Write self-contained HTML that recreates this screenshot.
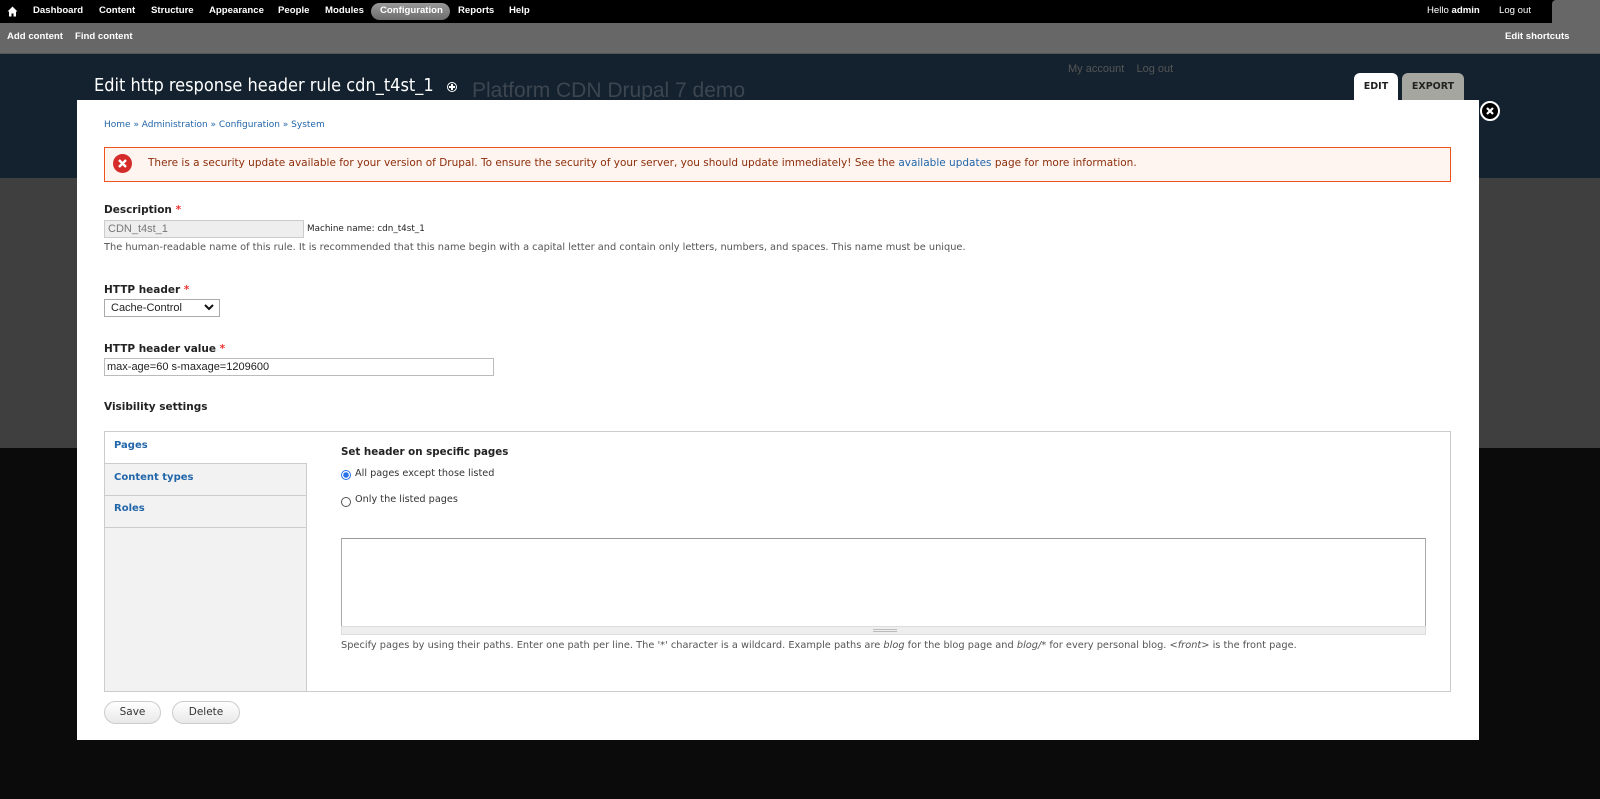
<!DOCTYPE html>
<html><head><meta charset="utf-8"><style>
*{box-sizing:border-box;margin:0;padding:0}
body{width:1600px;height:799px;overflow:hidden;background:#0b0b0b;font-family:"DejaVu Sans","Liberation Sans",sans-serif;position:relative}
.a{position:absolute;white-space:nowrap}
.tb{font-family:"Liberation Sans",sans-serif;font-weight:bold;font-size:9.6px;color:#fff}
.f{font-size:9.7px;color:#333}
.lbl{font-size:10.5px;font-weight:bold;color:#222}
.req{color:#e33}
.help{font-size:9.8px;color:#555}
.blue{color:#2266aa}
</style></head><body>
<div class="a" style="left:0;top:0;width:1600px;height:23px;background:#000"></div>
<div class="a" style="left:0;top:23px;width:1600px;height:31px;background:#676767;border-bottom:1px solid #555"></div>
<div class="a" style="left:0;top:54px;width:1600px;height:124px;background:#14222f"></div>
<div class="a" style="left:0;top:178px;width:1600px;height:270px;background:#3f3f3f"></div>

<svg class="a" style="left:7px;top:6px" width="11" height="11" viewBox="0 0 11 11"><path d="M5.5 0.5L0.5 5.5H2V10.5H4.5V7.5H6.5V10.5H9V5.5H10.5Z" fill="#fff"/></svg>
<div class="a tb" style="left:33px;top:5px">Dashboard</div>
<div class="a tb" style="left:99px;top:5px">Content</div>
<div class="a tb" style="left:151px;top:5px">Structure</div>
<div class="a tb" style="left:209px;top:5px">Appearance</div>
<div class="a tb" style="left:278px;top:5px">People</div>
<div class="a tb" style="left:325px;top:5px">Modules</div>
<div class="a" style="left:371px;top:3px;width:79px;height:17px;border-radius:9px;background:linear-gradient(#999,#6c6c6c)"></div>
<div class="a tb" style="left:380px;top:5px">Configuration</div>
<div class="a tb" style="left:458px;top:5px">Reports</div>
<div class="a tb" style="left:509px;top:5px">Help</div>
<div class="a tb" style="left:1427px;top:5px;font-weight:normal">Hello <b>admin</b></div>
<div class="a tb" style="left:1499px;top:5px;font-weight:normal">Log out</div>
<div class="a" style="left:1552px;top:0;width:48px;height:23px;background:#676767;border-radius:4px 0 0 0"></div>
<div class="a tb" style="left:7px;top:31px">Add content</div>
<div class="a tb" style="left:75px;top:31px">Find content</div>
<div class="a tb" style="left:1505px;top:31px">Edit shortcuts</div>

<div class="a" style="left:1068px;top:63px;font-family:'Liberation Sans',sans-serif;font-size:11px;color:#555">My account&nbsp;&nbsp;&nbsp;&nbsp;Log out</div>
<div class="a" style="left:472px;top:79px;font-family:'Liberation Sans',sans-serif;font-size:21px;color:#3b4651">Platform CDN Drupal 7 demo</div>
<div class="a" style="left:94px;top:75px;font-size:18px;color:#fff;font-family:'DejaVu Sans Condensed','DejaVu Sans',sans-serif;font-stretch:condensed;width:342px;overflow:hidden">Edit http response header rule cdn_t4st_1</div>
<div class="a" style="left:447px;top:82px;width:10px;height:10px;border:1.5px solid #fff;border-radius:50%"></div>
<div class="a" style="left:451px;top:84px;width:2px;height:6px;background:#fff"></div>
<div class="a" style="left:449px;top:86px;width:6px;height:2px;background:#fff"></div>
<div class="a" style="left:1354px;top:73px;width:44px;height:28px;background:#fff;border-radius:6px 6px 0 0;font-size:9.5px;font-weight:bold;color:#222;text-align:center;padding-top:8px">EDIT</div>
<div class="a" style="left:1402px;top:73px;width:62px;height:27px;background:#a6a6a0;border-radius:6px 6px 0 0;font-size:9.5px;font-weight:bold;color:#222;text-align:center;padding-top:8px">EXPORT</div>

<div class="a" style="left:77px;top:100px;width:1402px;height:640px;background:#fff"></div>
<div class="a" style="left:1480px;top:101px;width:20px;height:20px;border-radius:50%;background:#000;border:2px solid #fff"></div>
<svg class="a" style="left:1484px;top:105px" width="12" height="12" viewBox="0 0 12 12"><path d="M3 3L9 9M9 3L3 9" stroke="#fff" stroke-width="2.2"/></svg>

<div class="a blue" style="left:104px;top:120px;font-size:9px">Home » Administration » Configuration » System</div>

<div class="a" style="left:104px;top:147px;width:1347px;height:35px;background:#fef5f1;border:1px solid #ed541d"></div>
<div class="a" style="left:113px;top:154px;width:19px;height:19px;border-radius:50%;background:#d52b2b"></div>
<svg class="a" style="left:117px;top:158px" width="11" height="11" viewBox="0 0 11 11"><path d="M2 2L9 9M9 2L2 9" stroke="#fff" stroke-width="2.4"/></svg>
<div class="a" style="left:148px;top:157px;font-size:10.5px;color:#8c2e0b">There is a security update available for your version of Drupal. To ensure the security of your server, you should update immediately! See the <span class="blue">available updates</span> page for more information.</div>

<div class="a lbl" style="left:104px;top:204px">Description <span class="req">*</span></div>
<div class="a" style="left:104px;top:220px;width:200px;height:18px;background:#eee;border:1px solid #ccc;font-family:'Liberation Sans',sans-serif;font-size:11px;color:#777;padding:2px 3px">CDN_t4st_1</div>
<div class="a" style="left:307px;top:224px;font-size:8.8px;color:#222">Machine name: cdn_t4st_1</div>
<div class="a help" style="left:104px;top:242px">The human-readable name of this rule. It is recommended that this name begin with a capital letter and contain only letters, numbers, and spaces. This name must be unique.</div>

<div class="a lbl" style="left:104px;top:284px">HTTP header <span class="req">*</span></div>
<div class="a" style="left:104px;top:299px;width:116px;height:18px;border:1px solid #aaa;font-family:'Liberation Sans',sans-serif;font-size:11px;color:#222;padding:2px 6px;background:#fff">Cache-Control</div>
<svg class="a" style="left:204px;top:304px" width="10" height="7" viewBox="0 0 10 7"><path d="M1 1L5 5L9 1" stroke="#111" stroke-width="2" fill="none"/></svg>

<div class="a lbl" style="left:104px;top:343px">HTTP header value <span class="req">*</span></div>
<div class="a" style="left:104px;top:358px;width:390px;height:18px;border:1px solid #bbb;font-family:'Liberation Sans',sans-serif;font-size:11px;color:#222;padding:2px 2px">max-age=60 s-maxage=1209600</div>

<div class="a lbl" style="left:104px;top:401px">Visibility settings</div>

<div class="a" style="left:104px;top:431px;width:1347px;height:261px;border:1px solid #ccc"></div>
<div class="a" style="left:105px;top:432px;width:202px;height:259px;background:#f2f2f2;border-right:1px solid #ccc"></div>
<div class="a" style="left:105px;top:432px;width:202px;height:32px;background:#fff;border-bottom:1px solid #ccc"></div>
<div class="a" style="left:105px;top:495px;width:202px;height:1px;background:#ccc"></div>
<div class="a" style="left:105px;top:527px;width:202px;height:1px;background:#ccc"></div>
<div class="a lbl blue" style="left:114px;top:440px;font-size:10px">Pages</div>
<div class="a lbl blue" style="left:114px;top:472px;font-size:10px">Content types</div>
<div class="a lbl blue" style="left:114px;top:503px;font-size:10px">Roles</div>

<div class="a lbl" style="left:341px;top:446px;font-size:10.3px">Set header on specific pages</div>
<div class="a" style="left:341px;top:470px;width:10px;height:10px;border-radius:50%;border:1px solid #2a72e8;background:radial-gradient(circle,#2a72e8 2.5px,#fff 3px)"></div>
<div class="a f" style="left:355px;top:468px">All pages except those listed</div>
<div class="a" style="left:341px;top:497px;width:10px;height:10px;border-radius:50%;border:1px solid #555;background:#fff"></div>
<div class="a f" style="left:355px;top:494px">Only the listed pages</div>
<div class="a" style="left:341px;top:538px;width:1085px;height:89px;border:1px solid #aaa;border-top-color:#999"></div>
<div class="a" style="left:341px;top:626px;width:1085px;height:9px;background:#eee;border:1px solid #ddd"></div>
<div class="a" style="left:873px;top:629px;width:24px;height:3px;border-top:1px solid #bbb;border-bottom:1px solid #bbb"></div>
<div class="a help" style="left:341px;top:640px">Specify pages by using their paths. Enter one path per line. The '*' character is a wildcard. Example paths are <i>blog</i> for the blog page and <i>blog/*</i> for every personal blog. <i>&lt;front&gt;</i> is the front page.</div>

<div class="a" style="left:104px;top:701px;width:57px;height:23px;border:1px solid #ccc;border-radius:12px;background:linear-gradient(#fff,#e8e8e8);font-size:10.5px;color:#333;text-align:center;padding-top:4px">Save</div>
<div class="a" style="left:172px;top:701px;width:68px;height:23px;border:1px solid #ccc;border-radius:12px;background:linear-gradient(#fff,#e8e8e8);font-size:10.5px;color:#333;text-align:center;padding-top:4px">Delete</div>
</body></html>
